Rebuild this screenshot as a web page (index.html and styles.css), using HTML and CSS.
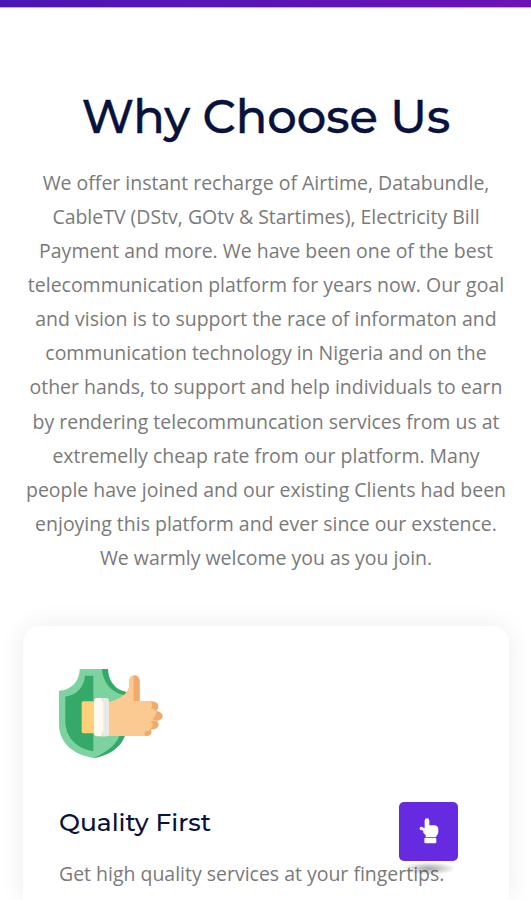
FILE: index.html
```html
<!DOCTYPE html>
<html lang="en">
<head>
  <meta charset="UTF-8">
  <meta name="viewport" content="width=device-width, initial-scale=1.0">
  <title>Why Choose Us</title>
  <link rel="stylesheet" href="styles.css">
</head>
<body>
  <div class="top-bar"></div>

  <section class="why-us">
    <h2>Why Choose Us</h2>
    <p class="intro">
      We offer instant recharge of Airtime, Databundle,<br>
      CableTV (DStv, GOtv &amp; Startimes), Electricity Bill<br>
      Payment and more. We have been one of the best<br>
      telecommunication platform for years now. Our goal<br>
      and vision is to support the race of informaton and<br>
      communication technology in Nigeria and on the<br>
      other hands, to support and help individuals to earn<br>
      by rendering telecommuncation services from us at<br>
      extremelly cheap rate from our platform. Many<br>
      people have joined and our existing Clients had been<br>
      enjoying this platform and ever since our exstence.<br>
      We warmly welcome you as you join.
    </p>

    <div class="card">
      <svg class="card-icon" viewBox="57 43 312 267" aria-hidden="true">
        <!-- shield -->
        <path fill="#7dd3a0" d="M119 43H204C204 78 226 108 260 112V222C254 268 218 300 160 310C100 300 57 266 57 208V108C92 108 119 80 119 43Z"/>
        <path fill="#34a968" d="M160 63H135C132 96 112 120 76 126V205C80 252 112 282 160 290Z"/>
        <path fill="#34a968" d="M186 43H204C204 78 226 108 260 112V122C219 119 188 85 186 43Z"/>
        <path fill="#34a968" d="M260 222C254 268 218 300 160 310C202 292 230 268 239 240L245 222Z"/>
        <!-- hand -->
        <path fill="#fdd07a" d="M130 140H166V236H130Q125 236 125 230V146Q125 140 130 140Z"/>
        <path fill="#fbc992" d="M202 143C236 135 260 122 267 98V78C267 57 299 57 299 78V139H341Q356 143 355 158L349 169Q366 172 368 184Q367 196 352 198Q359 205 354 216Q347 226 333 224Q338 240 325 244H202Z"/>
        <path fill="#f2aa6c" d="M280 63C291 60 299 68 299 80V139H281Z"/>
        <path fill="#f2aa6c" d="M331 141Q358 140 355 159Q353 165 347 169Q341 160 331 160Q343 152 331 141Z"/>
        <path fill="#f2aa6c" d="M349 169Q366 172 368 184Q366 197 348 198L336 192Q349 188 349 169Z"/>
        <path fill="#f2aa6c" d="M348 198Q360 207 353 218Q346 226 329 224Q345 215 332 200ZM333 225Q339 244 314 244V231Q323 230 333 225Z"/>
        <rect x="162" y="130" width="44" height="115" rx="9" fill="#fffaf0"/>
        <path fill="#e8e8e8" d="M185 130H196Q206 130 206 140V234Q206 245 196 245H184V237Q190 234 190 226V148Q190 137 182 135Z"/>
      </svg>
      <h3>Quality First</h3>
      <p>Get high quality services at your fingertips.</p>

      <a href="#" class="hand-btn" aria-label="Tap here">
        <svg viewBox="0 0 60 78" aria-hidden="true">
          <path fill="#fff" d="M17 8Q17 1 24 1Q31 1 31 8V22H47Q58 24 58 34V42Q58 49 52 54V57H20V52L13 44V38L3 35Q0 31 4 27Q9 25 13 29L17 31Z"/>
          <rect fill="#fff" x="16" y="59" width="36" height="17" rx="4"/>
        </svg>
      </a>
    </div>
  </section>
</body>
</html>
```
FILE: styles.css
```css
body {
  margin: 0;
  background: #fff;
  font-family: "Open Sans", sans-serif;
  color: #7a7a7a;
}

.top-bar {
  height: 7px;
  background: linear-gradient(to right, #4a17b5, #6d13b5);
  border-bottom: 1px solid #c9a5e8;
}

.why-us {
  padding: 82px 22px 0 23px;
}

h2,
h3 {
  font-family: Montserrat, Inter, sans-serif;
  font-weight: 500;
  color: #08123d;
  white-space: nowrap;
}

h2 {
  margin: 0;
  font-size: 46.4px;
  line-height: 54px;
  text-align: center;
  -webkit-text-stroke: 0.4px #08123d;
}

.intro {
  margin: 22px -15px 0;
  font-size: 19.48px;
  line-height: 34.08px;
  text-align: center;
  white-space: nowrap;
}

.card {
  position: relative;
  height: 274px;
  margin-top: 51px;
  padding: 43px 36px 0;
  box-sizing: border-box;
  border-radius: 16px 16px 0 0;
  background: #fff;
  box-shadow: 0 0 26px rgba(0, 0, 0, 0.08);
}

.card-icon {
  display: block;
  width: 104px;
  height: 89px;
}

.card h3 {
  margin: 49px 0 0;
  font-size: 24.9px;
  line-height: 30px;
}

.card p {
  margin: 20px 0 0;
  font-size: 19.48px;
  line-height: 34px;
  white-space: nowrap;
}

/* floating button over the card */
.hand-btn {
  position: absolute;
  top: 176px;
  left: 376px;
  display: flex;
  align-items: center;
  justify-content: center;
  width: 59px;
  height: 59px;
  border-radius: 5px;
  background: #662ae0;
}

.hand-btn::after {
  content: "";
  position: absolute;
  left: 3px;
  top: 60px;
  width: 54px;
  height: 13px;
  background: radial-gradient(closest-side, rgba(0, 0, 0, 0.35), rgba(0, 0, 0, 0));
}

.hand-btn svg {
  width: 20px;
  height: 26px;
}
```
